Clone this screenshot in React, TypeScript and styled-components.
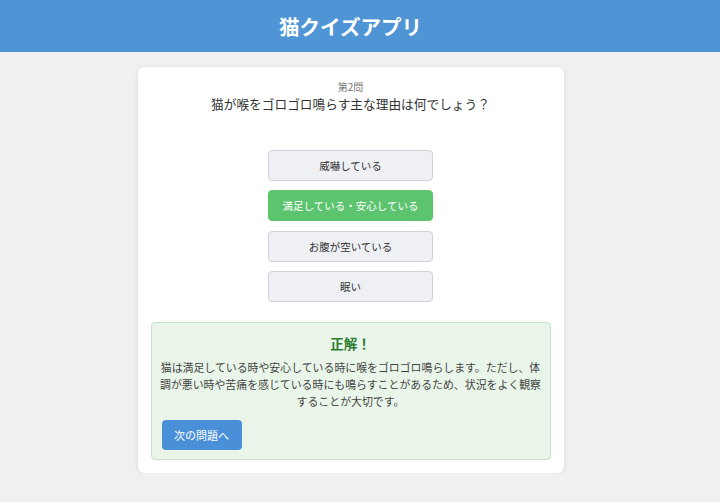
import React from "react";
import styled, { createGlobalStyle } from "styled-components";

const Global = createGlobalStyle`
  html, body { margin: 0; padding: 0; background: #f0f0f0; }
  body { font-family: "Noto Sans CJK JP", "Noto Sans", sans-serif; color: #333; }
`;

const Header = styled.header`
  height: 52px;
  background: #4f95d6;
  display: flex;
  align-items: center;
  justify-content: center;
  padding-right: 19px;
`;

const Title = styled.h1`
  margin: 0;
  color: #fff;
  font-size: 20.5px;
  font-weight: 700;
`;

const Main = styled.main`
  display: flex;
  justify-content: center;
  padding: 15px 19px 0 0;
`;

const Card = styled.section`
  width: 426px;
  box-sizing: border-box;
  background: #fff;
  border-radius: 6px;
  box-shadow: 0 1px 4px rgba(0, 0, 0, 0.1);
  padding: 13px 13px 13px;
  display: flex;
  flex-direction: column;
  align-items: center;
`;

const Number = styled.div`
  font-size: 10px;
  color: #777;
  line-height: 14px;
`;

const Question = styled.h2`
  margin: 0;
  font-size: 12.7px;
  font-weight: 400;
  color: #333;
  line-height: 20px;
`;

const Options = styled.div`
  margin-top: 35.5px;
  display: flex;
  flex-direction: column;
  gap: 9.5px;
`;

const Option = styled.button<{ $correct?: boolean }>`
  width: 165px;
  height: 31px;
  border-radius: 4px;
  font-family: inherit;
  font-size: 10.5px;
  border: 1px solid ${(p) => (p.$correct ? "#5cc46e" : "#cfd3d9")};
  background: ${(p) => (p.$correct ? "#5cc46e" : "#eef0f3")};
  color: ${(p) => (p.$correct ? "#fff" : "#333")};
  padding: 0;
`;

const Feedback = styled.div`
  margin-top: 20px;
  align-self: stretch;
  background: #e9f5e9;
  border: 1px solid #c7e3c9;
  border-radius: 4px;
  padding: 9px 10px 9px;
  display: flex;
  flex-direction: column;
  align-items: center;
`;

const Result = styled.div`
  font-size: 13.5px;
  font-weight: 700;
  color: #2e7d32;
  line-height: 22px;
`;

const Explanation = styled.p`
  margin: 5px -2px 0;
  font-size: 10.9px;
  line-height: 17px;
  text-align: center;
  color: #444;
`;

const NextButton = styled.button`
  align-self: flex-start;
  margin-top: 10px;
  width: 80px;
  height: 30px;
  border: none;
  border-radius: 4px;
  background: #4a90d9;
  color: #fff;
  font-family: inherit;
  font-size: 11px;
`;

export default function App() {
  return (
    <>
      <Global />
      <Header>
        <Title>猫クイズアプリ</Title>
      </Header>
      <Main>
        <Card>
          <Number>第2問</Number>
          <Question>猫が喉をゴロゴロ鳴らす主な理由は何でしょう？</Question>
          <Options>
            <Option>威嚇している</Option>
            <Option $correct>満足している・安心している</Option>
            <Option>お腹が空いている</Option>
            <Option>眠い</Option>
          </Options>
          <Feedback>
            <Result>正解！</Result>
            <Explanation>
              猫は満足している時や安心している時に喉をゴロゴロ鳴らします。ただし、体調が悪い時や苦痛を感じている時にも鳴らすことがあるため、状況をよく観察することが大切です。
            </Explanation>
            <NextButton>次の問題へ</NextButton>
          </Feedback>
        </Card>
      </Main>
    </>
  );
}
